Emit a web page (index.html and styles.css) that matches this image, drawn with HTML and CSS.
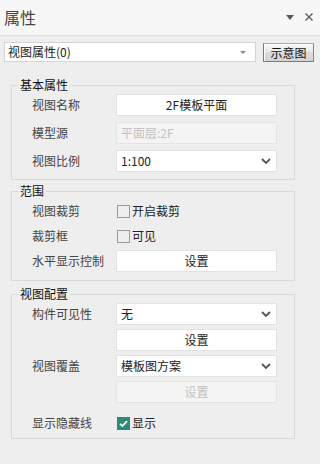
FILE: index.html
```html
<!DOCTYPE html>
<html lang="zh">
<head>
<meta charset="utf-8">
<link rel="stylesheet" href="styles.css">
</head>
<body>
<div class="panel">
  <div class="header">
    <span class="title">属性</span>
    <div class="hicons">
      <svg class="hmenu" width="8" height="5" viewBox="0 0 8 5"><path d="M0 0H8L4 5Z" fill="#5a5a5a"/></svg>
      <svg class="hclose" width="8" height="8" viewBox="0 0 8 8"><path d="M0.5 0.5L7.5 7.5M7.5 0.5L0.5 7.5" stroke="#5a5a5a" stroke-width="1.3"/></svg>
    </div>
  </div>
  <div class="toolbar">
    <div class="combo">
      <span>视图属性(0)</span>
      <svg width="6" height="3" viewBox="0 0 6 3"><path d="M0 0H6L3 3Z" fill="#888"/></svg>
    </div>
    <button class="classic">示意图</button>
  </div>

  <fieldset class="group g1">
    <legend>基本属性</legend>
    <div class="grid rows-basic">
      <div class="label">视图名称</div>
      <div class="field center">2F模板平面</div>
      <div class="label">模型源</div>
      <div class="field disabled">平面层:2F</div>
      <div class="label">视图比例</div>
      <div class="field select"><span>1:100</span><svg class="chev" width="10" height="6" viewBox="0 0 10 6"><path d="M1 1L5 5L9 1" fill="none" stroke="#555" stroke-width="1.8"/></svg></div>
    </div>
  </fieldset>

  <fieldset class="group g2">
    <legend>范围</legend>
    <div class="grid rows-range">
      <div class="label">视图裁剪</div>
      <div class="check"><span class="box"></span>开启裁剪</div>
      <div class="label">裁剪框</div>
      <div class="check"><span class="box"></span>可见</div>
      <div class="label">水平显示控制</div>
      <div class="field center">设置</div>
    </div>
  </fieldset>

  <fieldset class="group g3">
    <legend>视图配置</legend>
    <div class="grid rows-config">
      <div class="label">构件可见性</div>
      <div class="field select"><span>无</span><svg class="chev" width="10" height="6" viewBox="0 0 10 6"><path d="M1 1L5 5L9 1" fill="none" stroke="#555" stroke-width="1.8"/></svg></div>
      <div class="label"></div>
      <div class="field center">设置</div>
      <div class="label">视图覆盖</div>
      <div class="field select"><span>模板图方案</span><svg class="chev" width="10" height="6" viewBox="0 0 10 6"><path d="M1 1L5 5L9 1" fill="none" stroke="#555" stroke-width="1.8"/></svg></div>
      <div class="label"></div>
      <div class="field center disabled">设置</div>
      <div class="label last">显示隐藏线</div>
      <div class="check last"><span class="box checked"><svg width="13" height="13" viewBox="0 0 13 13"><path d="M3 6.8L5.4 9L10 4.2" fill="none" stroke="#fff" stroke-width="1.8"/></svg></span>显示</div>
    </div>
  </fieldset>
</div>
</body>
</html>
```
FILE: styles.css
```css
* { box-sizing: border-box; }
html, body { margin: 0; padding: 0; }
body {
  width: 320px;
  height: 464px;
  background: #eeeeee;
  font-family: "Noto Sans CJK SC", "Microsoft YaHei", sans-serif;
  font-size: 12px;
  color: #333;
  overflow: hidden;
}
.header {
  height: 36px;
  background: #f7f7f7;
  border-bottom: 1px solid #e2e2e2;
  display: flex;
  align-items: center;
  justify-content: space-between;
  padding: 0 7px 0 4px;
}
.title {
  font-size: 16px;
  color: #444;
  line-height: 20px;
  margin-top: -1px;
}
.hicons {
  display: flex;
  align-items: center;
  gap: 11px;
  margin-top: -1px;
}
.toolbar {
  display: flex;
  align-items: flex-start;
  margin-top: 6px;
  padding-left: 4px;
}
.combo {
  width: 252px;
  height: 20px;
  background: #fff;
  border: 1px solid #d4d4d4;
  display: flex;
  align-items: center;
  justify-content: space-between;
  padding: 0 9px 0 3px;
  color: #222;
  line-height: 18px;
}
.combo svg { margin-top: 1px; }
.classic {
  margin-left: 7px;
  margin-top: 1px;
  width: 51px;
  height: 19px;
  padding: 0;
  font-family: inherit;
  font-size: 12px;
  line-height: 16px;
  color: #111;
  border: 1px solid #7a7a7a;
  border-right-color: #888;
  border-top-color: #aaa;
  box-shadow: inset 1px 1px 0 #fff;
  background: linear-gradient(#f6f6f6, #ebebeb 45%, #dcdcdc 50%, #d4d4d4);
}
.group {
  margin: 0 0 0 11px;
  width: 284px;
  border: 1px solid #d9d9d9;
  padding: 0;
  min-width: 0;
}
.group legend {
  margin-left: 6px;
  padding: 0 2px;
  line-height: 16px;
  color: #111;
  font-size: 12px;
}
.g1 { margin-top: 15px; }
.g2 { margin-top: 3px; }
.g3 { margin-top: 5px; }
.grid {
  display: grid;
  grid-template-columns: 84px 161px;
  padding-left: 20px;
  align-items: center;
}
.rows-basic { row-gap: 6px; padding-top: 1px; padding-bottom: 7px; grid-auto-rows: 22px; }
.rows-range { row-gap: 3px; padding-top: 1px; padding-bottom: 8px; grid-auto-rows: 22px; }
.rows-config { row-gap: 4px; padding-top: 1px; padding-bottom: 9px; grid-auto-rows: 22px; }
.label.last, .check.last { margin-top: 10px; }
.label {
  color: #444;
  white-space: nowrap;
  line-height: 16px;
}
.field {
  height: 22px;
  background: #fff;
  border: 1px solid #e2e2e2;
  color: #222;
  line-height: 20px;
  padding: 0 4px;
  display: flex;
  align-items: center;
}
.field.center { justify-content: center; }
.field.disabled {
  background: #f4f4f4;
  color: #c2c2c2;
  border-color: #e4e4e4;
}
.field.select { justify-content: space-between; padding-right: 5px; }
.check {
  display: flex;
  align-items: center;
  color: #222;
  line-height: 16px;
}
.box {
  width: 13px;
  height: 13px;
  border: 1px solid #9a9a9a;
  margin: 0 2px 0 1px;
  display: inline-block;
  position: relative;
}
.box.checked {
  background: #2e8a78;
  border-color: #2e8a78;
}
.box.checked svg { display: block; margin: -1px; }
```
